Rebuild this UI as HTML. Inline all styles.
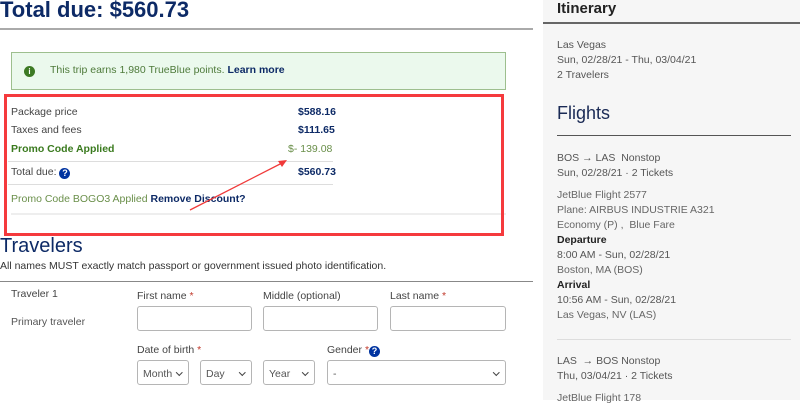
<!DOCTYPE html>
<html><head><meta charset="utf-8"><style>
*{margin:0;padding:0;box-sizing:border-box}
body{width:800px;height:400px;overflow:hidden;background:#fff;font-family:"Liberation Sans",Arial,sans-serif;color:#333;position:relative}
.a{position:absolute;white-space:nowrap}
.s{font-size:10.5px}
.nav{color:#0d2a66}
.b{font-weight:bold}
.g{color:#3a7a1e}
.lg{color:#6a8f4a}
.inp{position:absolute;border:1px solid #b5b5b5;border-radius:3px;background:#fff}
.sel{position:absolute;border:1px solid #b5b5b5;border-radius:3px;background:#fff;font-size:10.5px;color:#555;padding:7px 0 0 5px}
.sel:after{content:"";position:absolute;right:7px;top:9px;width:3.5px;height:3.5px;border-right:1.3px solid #444;border-bottom:1.3px solid #444;transform:rotate(45deg)}
.sb{color:#555;font-size:10.5px}
.req{color:#c0392b}
.q{display:inline-block;width:11px;height:11px;border-radius:50%;background:#0033a0;color:#fff;font-size:9px;font-weight:bold;text-align:center;line-height:11px;vertical-align:-1px}
</style></head><body>
<div class="a b nav" style="left:0;top:-3px;font-size:22px">Total due: $560.73</div>
<div class="a" style="left:0;top:28px;width:533px;height:2px;background:#aaa"></div>

<div class="a" style="left:11px;top:52px;width:495px;height:38px;background:#ebf9ed;border:1px solid #9dbf8e"></div>
<div class="a" style="left:24px;top:66px;width:11px;height:11px;border-radius:50%;background:#3d7a24;color:#fff;font-size:8px;font-weight:bold;text-align:center;line-height:11px">i</div>
<div class="a s" style="left:50px;top:64px;color:#4e7a3a">This trip earns 1,980 TrueBlue points. <b class="nav">Learn more</b></div>

<div class="a" style="left:11px;top:106px;font-size:10.5px;color:#444">Package price</div>
<div class="a s b nav" style="left:298px;top:106px">$588.16</div>
<div class="a" style="left:11px;top:124px;font-size:10.5px;color:#444">Taxes and fees</div>
<div class="a s b nav" style="left:298px;top:124px">$111.65</div>
<div class="a s b g" style="left:11px;top:143px">Promo Code Applied</div>
<div class="a s lg" style="left:288px;top:143px">$- 139.08</div>
<div class="a" style="left:8px;top:161px;width:325px;height:1px;background:#ddd"></div>
<div class="a" style="left:11px;top:166px;font-size:10.5px;color:#444">Total due: <span class="q">?</span></div>
<div class="a s b nav" style="left:298px;top:166px">$560.73</div>
<div class="a" style="left:8px;top:184px;width:325px;height:1px;background:#ddd"></div>
<div class="a s lg" style="left:11px;top:193px">Promo Code BOGO3 Applied <b class="nav">Remove Discount?</b></div>
<div class="a" style="left:11px;top:213px;width:495px;height:2px;background:#eee"></div>

<div class="a" style="left:4px;top:94px;width:500px;height:142px;border:3px solid #f53a3d"></div>
<svg class="a" style="left:0;top:0" width="800" height="400"><line x1="190" y1="210" x2="284" y2="162" stroke="#f03a3a" stroke-width="1.3"/><path d="M287 160 L278 161 L282 167 Z" fill="#f03a3a"/></svg>

<div class="a nav" style="left:0;top:235px;font-size:20px">Travelers</div>
<div class="a" style="left:0;top:260px;font-size:10.5px;color:#333">All names MUST exactly match passport or government issued photo identification.</div>
<div class="a" style="left:0;top:281px;width:533px;height:1px;background:#888"></div>

<div class="a" style="left:11px;top:288px;font-size:10.5px;color:#444">Traveler 1</div>
<div class="a" style="left:11px;top:316px;font-size:10.5px;color:#555">Primary traveler</div>
<div class="a" style="left:137px;top:290px;font-size:10.5px;color:#444">First name <span class="req">*</span></div>
<div class="a" style="left:263px;top:290px;font-size:10.5px;color:#444">Middle (optional)</div>
<div class="a" style="left:390px;top:290px;font-size:10.5px;color:#444">Last name <span class="req">*</span></div>
<div class="inp" style="left:137px;top:306px;width:115px;height:25px"></div>
<div class="inp" style="left:263px;top:306px;width:115px;height:25px"></div>
<div class="inp" style="left:390px;top:306px;width:116px;height:25px"></div>
<div class="a" style="left:137px;top:344px;font-size:10.5px;color:#444">Date of birth <span class="req">*</span></div>
<div class="a" style="left:327px;top:344px;font-size:10.5px;color:#444">Gender <span class="req">*</span><span class="q">?</span></div>
<div class="sel" style="left:137px;top:360px;width:52px;height:25px">Month</div>
<div class="sel" style="left:200px;top:360px;width:52px;height:25px">Day</div>
<div class="sel" style="left:263px;top:360px;width:52px;height:25px">Year</div>
<div class="sel" style="left:327px;top:360px;width:179px;height:25px">-</div>

<div class="a" style="left:543px;top:0;width:257px;height:400px;background:#f6f6f6"></div>
<div class="a b" style="left:557px;top:0;font-size:15px;color:#222">Itinerary</div>
<div class="a" style="left:543px;top:22px;width:257px;height:2px;background:#666"></div>
<div class="a sb" style="left:557px;top:39px">Las Vegas</div>
<div class="a sb" style="left:557px;top:54px">Sun, 02/28/21 - Thu, 03/04/21</div>
<div class="a sb" style="left:557px;top:69px">2 Travelers</div>
<div class="a nav" style="left:557px;top:103px;font-size:18px;color:#1a2a55">Flights</div>
<div class="a" style="left:557px;top:135px;width:234px;height:1px;background:#555"></div>
<div class="a sb" style="left:557px;top:152px">BOS &#8594; LAS&nbsp; Nonstop</div>
<div class="a sb" style="left:557px;top:167px">Sun, 02/28/21 · 2 Tickets</div>
<div class="a sb" style="left:557px;top:189px;color:#666">JetBlue Flight 2577</div>
<div class="a sb" style="left:557px;top:204px;color:#666">Plane: AIRBUS INDUSTRIE A321</div>
<div class="a sb" style="left:557px;top:219px;color:#666">Economy (P) ,&nbsp; Blue Fare</div>
<div class="a sb b" style="left:557px;top:234px;color:#222">Departure</div>
<div class="a sb" style="left:557px;top:249px">8:00 AM - Sun, 02/28/21</div>
<div class="a sb" style="left:557px;top:264px;color:#666">Boston, MA (BOS)</div>
<div class="a sb b" style="left:557px;top:279px;color:#222">Arrival</div>
<div class="a sb" style="left:557px;top:294px">10:56 AM - Sun, 02/28/21</div>
<div class="a sb" style="left:557px;top:309px;color:#666">Las Vegas, NV (LAS)</div>
<div class="a" style="left:557px;top:339px;width:234px;height:1px;background:#ddd"></div>
<div class="a sb" style="left:557px;top:355px">LAS &nbsp;&#8594; BOS Nonstop</div>
<div class="a sb" style="left:557px;top:370px">Thu, 03/04/21 · 2 Tickets</div>
<div class="a sb" style="left:557px;top:392px;color:#666">JetBlue Flight 178</div>
</body></html>
